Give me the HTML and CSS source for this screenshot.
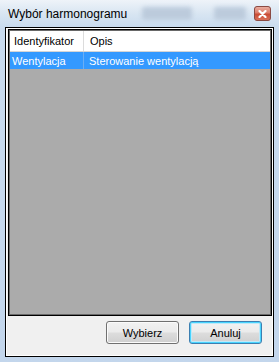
FILE: index.html
```html
<!DOCTYPE html>
<html>
<head>
<meta charset="utf-8">
<link rel="stylesheet" href="styles.css">
</head>
<body>
<div class="window">
  <div class="titlebar">
    <span class="title">Wybór harmonogramu</span>
    <span class="ghost g1"></span>
    <span class="ghost g2"></span>
    <div class="close">
      <svg class="close-x" width="9" height="8" viewBox="0 0 9 8"><path d="M1.5 1 L7.5 7 M7.5 1 L1.5 7" stroke="#ffffff" stroke-width="2.2" stroke-linecap="round"/></svg>
    </div>
  </div>
  <div class="client">
    <div class="list">
      <div class="header">
        <div class="col c1">Identyfikator</div>
        <div class="col c2">Opis</div>
      </div>
      <div class="row selected">
        <div class="cell c1">Wentylacja</div>
        <div class="cell c2">Sterowanie wentylacją</div>
      </div>
    </div>
    <div class="buttons">
      <button class="btn">Wybierz</button>
      <button class="btn focus">Anuluj</button>
    </div>
  </div>
</div>
</body>
</html>
```

FILE: styles.css
```css
html, body {
  margin: 0;
  padding: 0;
  width: 279px;
  height: 362px;
  overflow: hidden;
}
body {
  font-family: "Liberation Sans", Arial, sans-serif;
  font-size: 11px;
}
.window {
  width: 279px;
  height: 362px;
  box-sizing: border-box;
  display: flex;
  flex-direction: column;
  background: linear-gradient(to bottom, #dde8f3 0px, #c9dbee 30px, #c3d6ec 100%);
  padding: 0 5px 5px 5px;
}
.titlebar {
  height: 27px;
  position: relative;
  display: flex;
  align-items: center;
  flex-shrink: 0;
  background: linear-gradient(to bottom, #eef3f9 0px, #d8e5f2 14px, #c9dbee 27px);
  margin: 0 -5px;
  padding: 0 5px;
}
.title {
  padding-left: 3px;
  color: #000;
  font-size: 12px;
  position: relative;
  z-index: 1;
}
.ghost {
  position: absolute;
  top: 7px;
  height: 13px;
  border-radius: 3px;
  background: #bccbdc;
  filter: blur(2px);
}
.g1 { left: 142px; width: 50px; }
.g2 { left: 214px; width: 32px; }
.close {
  position: absolute;
  right: 8px;
  top: 6px;
  width: 17px;
  height: 15px;
  box-sizing: border-box;
  border: 1px solid #8a4a43;
  border-radius: 3px;
  background-color: #cf5a44;
  background-image: linear-gradient(to bottom, #e9ac9f 0%, #dc7c69 45%, #c94b34 55%, #d96f57 100%);
  display: flex;
  align-items: center;
  justify-content: center;
}
.close-x { display: block; }
.client {
  flex: 1;
  border: 1px solid #000;
  box-shadow: inset 0 0 0 1px #fff;
  background: #f0f0f0;
  display: flex;
  flex-direction: column;
  padding: 1px 1px 0 2px;
}
.list {
  flex: 1;
  border: 1px solid #000;
  box-shadow: inset 0 0 0 1px #696969;
  background: #ababab;
  padding: 1px;
  display: flex;
  flex-direction: column;
}
.header {
  display: flex;
  height: 20px;
  background: #fff;
  border-bottom: 1px solid #d5d5d5;
}
.col {
  display: flex;
  align-items: center;
  color: #000;
  padding-left: 4px;
  box-sizing: border-box;
}
.header .c1 { width: 74px; border-right: 1px solid #dcdcdc; }
.header .c2 { flex: 1; padding-left: 6px; }
.row {
  display: flex;
  height: 17px;
  align-items: center;
}
.row.selected {
  background: #3399ff;
  color: #fff;
}
.cell { box-sizing: border-box; padding-left: 2px; }
.row .c1 { width: 74px; border-right: 1px solid #6aaef5; height: 17px; display: flex; align-items: center; }
.row .c2 { padding-left: 5px; }
.buttons {
  display: flex;
  justify-content: flex-end;
  gap: 10px;
  padding: 5px 10px 12px 0;
}
.btn {
  width: 73px;
  height: 23px;
  font-family: inherit;
  font-size: 11px;
  color: #000;
  border: 1px solid #707070;
  border-radius: 3px;
  background: linear-gradient(to bottom, #f2f2f2 0%, #ebebeb 48%, #dddddd 52%, #cfcfcf 100%);
  box-shadow: inset 0 0 0 1px #fbfbfb;
  padding: 0;
}
.btn.focus {
  border-color: #3c7fb1;
  box-shadow: inset 0 0 0 1px #48d4fe, inset 0 0 0 2px #bfe9f9;
}
```
